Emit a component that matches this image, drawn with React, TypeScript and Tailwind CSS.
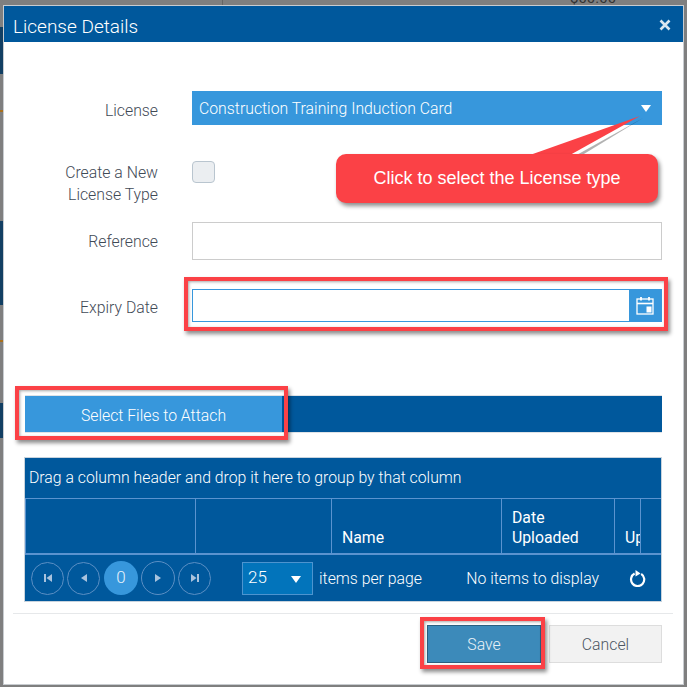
const label = 'text-right text-[#3f4a56] text-[15.8px] font-light leading-[22px] w-[121px] shrink-0'
const cell = 'border-l border-[#5b93cf] flex items-end pl-[10px] pb-[5px] leading-[20px]'
const arrow = 'w-0 h-0 border-l-[5px] border-r-[5px] border-t-[7px] border-l-transparent border-r-transparent border-t-white'

function PagerButton({ d, className = 'size-[33px]' }: { d: string, className?: string }) {
  return (
    <div className={`${className} rounded-full border border-[#5b8fc4] flex items-center justify-center shrink-0`}>
      <svg width="10" height="10" viewBox="0 0 10 10" fill="#a9c3de"><path d={d} /></svg>
    </div>
  )
}

function Mark({ className }: { className: string }) {
  return <div className={`absolute border-4 border-[#fb4146] shadow-[2px_3px_4px_rgba(0,0,0,0.45),inset_1px_1px_3px_rgba(0,0,0,0.35)] pointer-events-none ${className}`} />
}

function Backdrop() {
  return (
    <>
      <div className="absolute left-0 top-[27px] w-[3px] h-[47px] bg-[#123f63]" />
      <div className="absolute left-0 top-[110px] w-[3px] h-[2px] bg-[#a9701c]" />
      <div className="absolute left-0 top-[221px] w-[3px] h-[84px] bg-[#123f63]" />
      <div className="absolute left-0 top-[340px] w-[3px] h-[2px] bg-[#a9701c]" />
      <div className="absolute left-0 top-[403px] w-[3px] h-[35px] bg-[#123f63]" />
      <div className="absolute left-[222px] top-0 w-px h-[5px] bg-[#666666]" />
      <div className="absolute left-[570px] top-[-11px] text-[#333333] text-[15px] leading-[18px]">$00.00</div>
    </>
  )
}

export default function App() {
  return (
    <div className="relative w-[687px] h-[687px] bg-[#7f7f7f] overflow-hidden font-['Roboto',sans-serif]">
      <Backdrop />

      {/* dialog */}
      <div className="absolute left-[3px] top-[5px] w-[681px] h-[680px] bg-white border border-[#c8ccd0] flex flex-col">
        <div className="h-[36px] bg-[#00589c] flex items-center justify-between pl-[9px] pr-[12px] pt-[2px] shrink-0">
          <span className="text-white text-[19px] font-light pt-[4px]">License Details</span>
          <svg width="12" height="12" viewBox="0 0 12 12" stroke="#dbe6f0" strokeWidth="2.6"><path d="M1.5 1.5l9 9M10.5 1.5l-9 9" /></svg>
        </div>

        <div className="flex flex-col pl-[33px] pr-[21px] pt-[49px]">
          <div className="flex items-center gap-[34px] h-[34px]">
            <div className={`${label} pt-[6px]`}>License</div>
            <div className="flex-1 h-full bg-[#3797dc] flex items-center justify-between pl-[7px] pr-[11px]">
              <span className="text-white text-[15.8px] font-light pt-[2px]">Construction Training Induction Card</span>
              <div className={arrow} />
            </div>
          </div>

          <div className="flex gap-[34px] mt-[36px] h-[44px]">
            <div className={`${label} pt-[1px]`}>Create a New<br />License Type</div>
            <div className="w-[23px] h-[22px] rounded-[4px] bg-[#ebeef1] border border-[#b9c5cf]" />
          </div>

          <div className="flex items-center gap-[34px] mt-[17px] h-[38px]">
            <div className={`${label} pt-[2px]`}>Reference</div>
            <div className="flex-1 h-full border border-[#cccccc]" />
          </div>

          <div className="flex items-center gap-[34px] mt-[29px] h-[33px]">
            <div className={`${label} pt-[4px]`}>Expiry Date</div>
            <div className="flex-1 h-full border border-[#3797dc] flex justify-end">
              <div className="w-[32px] bg-[#3797dc] flex items-center justify-center">
                <svg width="18" height="19" viewBox="0 0 18 19" fill="none" stroke="white" strokeWidth="1.3">
                  <rect x="1" y="3" width="16" height="15" />
                  <path d="M1 7.5h16" strokeWidth="1.6" />
                  <path d="M5 1v3.5M13 1v3.5" strokeWidth="1.8" />
                  <rect x="10.5" y="10.5" width="5" height="6" fill="white" stroke="none" />
                </svg>
              </div>
            </div>
          </div>
        </div>

        <div className="mx-[21px] mt-[73px] h-[38px] bg-[#00589c] border-y border-[#dfe3e7] flex">
          <div className="w-[257px] bg-[#3797dc] flex items-center justify-center text-white text-[15.8px] font-light pt-[4px]">
            Select Files to Attach
          </div>
        </div>

        <div className="ml-[20px] mr-[21px] mt-[24px] h-[145px] bg-[#00589c] border border-[#c8d3dd] flex flex-col text-white text-[15.8px] font-light">
          <div className="h-[40px] flex items-center pl-[4px] shrink-0">Drag a column header and drop it here to group by that column</div>
          <div className="h-[57px] border-t border-b-[2px] border-t-[#5b93cf] border-b-[#5b93cf] flex shrink-0">
            <div className="w-[170px] border-l border-[#5b93cf]" />
            <div className="w-[136px] border-l border-[#5b93cf]" />
            <div className={`w-[170px] font-normal ${cell}`}>Name</div>
            <div className={`w-[113px] font-normal ${cell}`}>Date<br />Uploaded</div>
            <div className={`w-[26px] font-normal overflow-hidden ${cell}`}>Up</div>
            <div className="flex-1 border-l border-[#5b93cf]" />
          </div>
          <div className="flex-1 flex items-center pl-[6px] pr-[15px]">
            <div className="flex items-center gap-[3px]">
              <PagerButton d="M1 1h2v8H1zM9 1v8L3.5 5z" />
              <PagerButton d="M8 1v8L2 5z" />
              <div className="size-[34px] ml-[1px] rounded-full bg-[#3797dc] flex items-center justify-center text-[#e6f2fb] text-[17px]">0</div>
              <PagerButton d="M2 1v8l6-4z" className="size-[34px]" />
              <PagerButton d="M1 1v8l5.5-4zM7 1h2v8H7z" />
            </div>
            <div className="ml-[31px] w-[71px] h-[33px] bg-[#0274bb] border border-[#4d94cf] flex items-center justify-between pl-[5px] pr-[11px] text-[17px]">
              25
              <div className={`${arrow} mt-[2px]`} />
            </div>
            <span className="ml-[6px] pt-[2px]">items per page</span>
            <span className="ml-auto pt-[2px]">No items to display</span>
            <svg className="ml-[30px]" width="17" height="18" viewBox="0 0 17 18" fill="none">
              <path d="M5.6 4.6A6.6 6.6 0 1 0 12.2 4.9" stroke="white" strokeWidth="2.2" />
              <path d="M6.5 1l5 3.4-5 3.2z" fill="white" />
            </svg>
          </div>
        </div>

        <div className="ml-[9px] mr-[10px] mt-[11px] border-t border-[#e6e8ea]" />

        <div className="flex justify-end gap-[8px] pr-[21px] mt-[11px]">
          <div className="w-[114px] h-[38px] bg-[#3c8aba] border border-[#2a5f80] flex items-center justify-center text-[#e8f1f7] text-[15.8px] font-light pt-[2px]">Save</div>
          <div className="w-[113px] h-[38px] bg-[#f2f2f2] border border-[#dddddd] flex items-center justify-center text-[#4c5763] text-[15.8px] font-light pt-[2px]">Cancel</div>
        </div>
      </div>

      {/* annotations */}
      <Mark className="left-[184px] top-[277px] w-[484px] h-[54px]" />
      <Mark className="left-[15px] top-[386px] w-[273px] h-[54px]" />
      <Mark className="left-[420px] top-[617px] w-[125px] h-[52px]" />

      <svg className="absolute left-[520px] top-[112px]" width="130" height="50" viewBox="0 0 130 50">
        <path d="M50 43L120 4L56 43z" fill="#000" opacity="0.3" transform="translate(3,2)" />
        <path d="M10 43L120 4L50 43z" fill="#fb4146" />
      </svg>
      <div className="absolute left-[336px] top-[154px] w-[322px] h-[49px] rounded-[10px] bg-[#fb4146] shadow-[2px_3px_4px_rgba(0,0,0,0.45)] flex items-center justify-center text-white text-[18px] font-['Liberation_Sans',sans-serif]">
        Click to select the License type
      </div>
    </div>
  )
}
